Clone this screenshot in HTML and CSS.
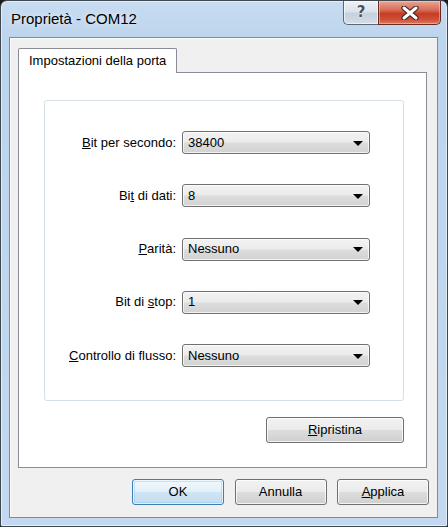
FILE: index.html
```html
<!DOCTYPE html>
<html lang="it">
<head>
<meta charset="utf-8">
<title>Proprietà - COM12</title>
<link rel="stylesheet" href="styles.css">
</head>
<body>
<div class="window">
  <div class="titlebar">
    <div class="title">Proprietà - COM12</div>
    <div class="caption">
      <div class="cbtn help"><span class="qmark">?</span></div>
      <div class="cbtn close">
        <svg width="18" height="14" viewBox="0 0 18 14">
          <path d="M3 2 L15 12 M15 2 L3 12" stroke="#3a2420" stroke-width="5.2" stroke-linecap="round" fill="none"/>
          <path d="M3 2 L15 12 M15 2 L3 12" stroke="#ffffff" stroke-width="3" stroke-linecap="round" fill="none"/>
        </svg>
      </div>
    </div>
  </div>
  <div class="client">
    <div class="tabs">
      <div class="tab">Impostazioni della porta</div>
    </div>
    <div class="panel">
      <div class="group">
        <div class="row">
          <span class="lbl"><u>B</u>it per secondo:</span>
          <div class="combo"><span>38400</span><i class="arrow"></i></div>
        </div>
        <div class="row">
          <span class="lbl">Bi<u>t</u> di dati:</span>
          <div class="combo"><span>8</span><i class="arrow"></i></div>
        </div>
        <div class="row">
          <span class="lbl"><u>P</u>arità:</span>
          <div class="combo"><span>Nessuno</span><i class="arrow"></i></div>
        </div>
        <div class="row">
          <span class="lbl">Bit di <u>s</u>top:</span>
          <div class="combo"><span>1</span><i class="arrow"></i></div>
        </div>
        <div class="row">
          <span class="lbl"><u>C</u>ontrollo di flusso:</span>
          <div class="combo"><span>Nessuno</span><i class="arrow"></i></div>
        </div>
      </div>
      <div class="panel-actions">
        <button class="btn reset"><u>R</u>ipristina</button>
      </div>
    </div>
    <div class="actions">
      <button class="btn dlg default">OK</button>
      <button class="btn dlg">Annulla</button>
      <button class="btn dlg"><u>A</u>pplica</button>
    </div>
  </div>
</div>
</body>
</html>
```

FILE: styles.css
```css
* { box-sizing: border-box; }

html, body {
  margin: 0;
  padding: 0;
  background: #1a1a1a;
}

body {
  width: 448px;
  height: 527px;
  overflow: hidden;
  font-family: "Liberation Sans", Arial, sans-serif;
  font-size: 13px;
  color: #000;
}

.window {
  width: 448px;
  height: 527px;
  display: flex;
  flex-direction: column;
  border: 1px solid #3f4751;
  border-radius: 7px 7px 2px 2px;
  background: linear-gradient(180deg, #c7dcf1 0%, #bcd4ec 40px, #c2d9ef 100%);
  box-shadow: inset 0 0 0 1px rgba(255, 255, 255, 0.55);
  padding: 0 9px 8px 8px;
}

.titlebar {
  height: 36px;
  display: flex;
  justify-content: space-between;
  align-items: flex-start;
  flex: none;
}

.title {
  padding: 9px 0 0 2px;
  font-size: 15px;
  line-height: 18px;
  color: #000;
  text-shadow: 0 0 6px rgba(255, 255, 255, 0.9);
}

.caption {
  display: flex;
  margin-right: -3px;
}

.cbtn {
  height: 24px;
  display: flex;
  align-items: center;
  justify-content: center;
  border: 1px solid #5c6876;
  border-top: none;
}

.help {
  width: 35px;
  border-right: none;
  border-radius: 0 0 0 5px;
  background: linear-gradient(180deg, #edf1f6 0%, #dbe3ec 45%, #c6d1de 55%, #d3dde8 100%);
  box-shadow: inset 0 0 0 1px rgba(255, 255, 255, 0.6);
}

.qmark {
  font-family: "DejaVu Sans", sans-serif;
  font-weight: bold;
  font-size: 15px;
  line-height: 15px;
  color: #4a5360;
  text-shadow: 0 0 1px #fff, 0 0 2px #fff;
}

.close {
  width: 63px;
  border-color: #6a2a22;
  border-radius: 0 0 5px 0;
  background: linear-gradient(180deg, #e8a797 0%, #d86a55 40%, #c53c24 55%, #cf5039 80%, #dc7a62 100%);
  box-shadow: inset 0 0 0 1px rgba(255, 220, 210, 0.45);
}

.client {
  flex: 1;
  display: flex;
  flex-direction: column;
  border: 1px solid #7d8a99;
  background: #f0f0f0;
  box-shadow: inset 1px 1px 0 #fafafa;
}

.tabs {
  display: flex;
  padding: 10px 0 0 8px;
  flex: none;
}

.tab {
  position: relative;
  z-index: 1;
  height: 25px;
  margin-bottom: -1px;
  padding: 4px 10px 0 10px;
  line-height: 16px;
  background: #fff;
  border: 1px solid #898c95;
  border-bottom: none;
  border-radius: 2px 2px 0 0;
}

.panel {
  height: 396px;
  margin: 0 10px 0 8px;
  border: 1px solid #898c95;
  background: #fff;
  display: flex;
  flex-direction: column;
  padding: 27px 0 0 25px;
  flex: none;
}

.group {
  width: 360px;
  height: 301px;
  border: 1px solid #d5dfe5;
  border-radius: 3px;
  padding-top: 30px;
  display: flex;
  flex-direction: column;
  gap: 30.25px;
}

.row {
  display: flex;
  align-items: center;
  height: 23px;
}

.lbl {
  width: 131px;
  text-align: right;
  line-height: 16px;
  white-space: nowrap;
}

.combo {
  margin-left: 6px;
  width: 188px;
  height: 23px;
  border: 1px solid #707070;
  border-radius: 3px;
  background: linear-gradient(180deg, #f3f3f3 0%, #ebebeb 48%, #dddddd 52%, #d2d2d2 100%);
  box-shadow: inset 0 0 0 1px rgba(255, 255, 255, 0.7);
  display: flex;
  align-items: center;
  justify-content: space-between;
  padding: 0 6px 0 5px;
  line-height: 16px;
}

.arrow {
  width: 0;
  height: 0;
  border-left: 5px solid transparent;
  border-right: 5px solid transparent;
  border-top: 5px solid #000;
  margin-top: 1px;
}

.panel-actions {
  width: 360px;
  display: flex;
  justify-content: flex-end;
  margin-top: 16px;
}

.btn {
  font-family: "Liberation Sans", Arial, sans-serif;
  font-size: 13px;
  color: #000;
  height: 26px;
  padding: 0;
  border: 1px solid #707070;
  border-radius: 3px;
  background: linear-gradient(180deg, #f2f2f2 0%, #ebebeb 48%, #dddddd 52%, #cfcfcf 100%);
  box-shadow: inset 0 0 0 1px rgba(255, 255, 255, 0.75);
  line-height: 16px;
}

.reset {
  width: 138px;
}

.actions {
  display: flex;
  justify-content: flex-end;
  gap: 10.5px;
  padding: 11px 8px 0 0;
}

.dlg {
  width: 92px;
}

.default {
  border-color: #3c7fb1;
  background: linear-gradient(180deg, #f1f8fd 0%, #e3f0f9 48%, #cfe5f4 52%, #c2dcef 100%);
  box-shadow: inset 0 0 0 1px rgba(255, 255, 255, 0.7), inset 0 0 0 2px rgba(120, 190, 235, 0.35);
}
```
